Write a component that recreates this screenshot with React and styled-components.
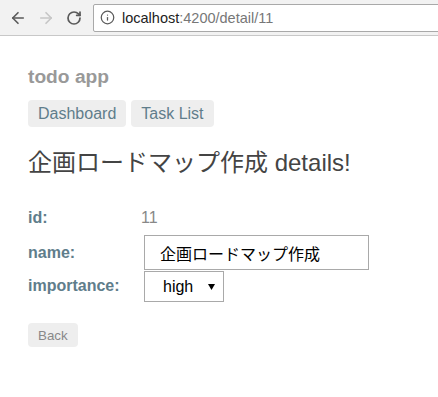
import React from 'react'
import styled, { createGlobalStyle } from 'styled-components'
import { ArrowLeft, ArrowRight, RotateCw, Info } from 'lucide-react'

const GlobalStyle = createGlobalStyle`
    body {
        margin: 0;
        background: #fff;
        font-family: "Liberation Sans", Arial, "Noto Sans CJK JP", sans-serif;
    }
`

const Toolbar = styled.div`
    display: flex;
    align-items: center;
    height: 35px;
    background-color: #f2f2f2;
    border-bottom: 1px solid #c8c8c8;
    overflow: hidden;
`
const NavIcon = styled.span`
    display: flex;
    align-items: center;
    justify-content: center;
    width: 28px;
    margin-left: ${props => props.first ? '4px' : '0'};
    color: ${props => props.disabled ? '#c6c6c6' : '#5a5a5a'};
`
const AddressBar = styled.div`
    display: flex;
    align-items: center;
    flex: 1;
    height: 26px;
    margin-left: 5px;
    margin-right: -20px;
    background-color: #fff;
    border: 1px solid #a9a9a9;
    border-radius: 2px;
    font-size: 14.5px;
`
const InfoIcon = styled.span`
    display: flex;
    color: #5a5a5a;
    margin: 0 7px 0 6px;
`
const Host = styled.span`
    color: #222;
`
const Path = styled.span`
    color: #777;
`

const Page = styled.div`
    padding: 30px 28px 0 28px;
    color: #333;
`
const Title = styled.h1`
    margin: 0;
    font-size: 19.2px;
    line-height: 22px;
    color: #999;
    font-weight: bold;
`
const Nav = styled.nav`
    display: flex;
    gap: 5px;
    margin-top: 12px;
`
const NavLink = styled.a`
    display: inline-block;
    padding: 5px 10px 4px 10px;
    line-height: 18px;
    font-size: 16px;
    color: #607d8b;
    background-color: #eee;
    border-radius: 4px;
    text-decoration: none;
`
const Heading = styled.h2`
    margin: 22px 0 0 0;
    font-size: 24px;
    line-height: 28px;
    font-weight: normal;
    color: #444;
`
const Details = styled.div`
    display: grid;
    grid-template-columns: 113px auto;
    align-items: center;
    margin-top: 32px;
`
const Label = styled.label`
    font-size: 16px;
    line-height: 18px;
    font-weight: bold;
    color: #607d8b;
    margin-bottom: ${props => props.gap || 0}px;
`
const Value = styled.div`
    font-size: 16px;
    line-height: 18px;
    color: #888;
    margin-bottom: ${props => props.gap || 0}px;
`
const NameInput = styled.input`
    box-sizing: border-box;
    width: 225px;
    height: 35px;
    margin-left: 3px;
    padding: 0 0 0 15px;
    border: 1px solid #a9a9a9;
    font-family: "Liberation Sans", Arial, "Noto Sans CJK JP", sans-serif;
    font-size: 16px;
    color: #000;
    outline: none;
`
const SelectWrap = styled.div`
    position: relative;
    width: 80px;
    margin-left: 3px;
    margin-top: 1px;
`
const Select = styled.select`
    box-sizing: border-box;
    appearance: none;
    width: 80px;
    height: 31px;
    padding: 0 0 0 18px;
    border: 1px solid #a9a9a9;
    border-radius: 0;
    background: #fff;
    font-family: "Liberation Sans", Arial, sans-serif;
    font-size: 16px;
    color: #000;
    outline: none;
`
const Caret = styled.svg`
    position: absolute;
    right: 9px;
    top: 13px;
    pointer-events: none;
`
const BackButton = styled.button`
    margin-top: 21px;
    height: 24px;
    padding: 0 10px;
    border: none;
    border-radius: 4px;
    background-color: #eee;
    color: #888;
    font-family: "Liberation Sans", Arial, sans-serif;
    font-size: 13.33px;
`

const task = { id: 11, name: '企画ロードマップ作成', importance: 'high' }

export default function App() {
    return (
        <>
            <GlobalStyle />
            <Toolbar>
                <NavIcon first><ArrowLeft size={18} strokeWidth={2.2} /></NavIcon>
                <NavIcon disabled><ArrowRight size={18} strokeWidth={2.2} /></NavIcon>
                <NavIcon><RotateCw size={16} strokeWidth={2.6} /></NavIcon>
                <AddressBar>
                    <InfoIcon><Info size={15} strokeWidth={2} /></InfoIcon>
                    <Host>localhost</Host><Path>:4200/detail/11</Path>
                </AddressBar>
            </Toolbar>
            <Page>
                <Title>todo app</Title>
                <Nav>
                    <NavLink href="#">Dashboard</NavLink>
                    <NavLink href="#">Task List</NavLink>
                </Nav>
                <Heading>{task.name} details!</Heading>
                <Details>
                    <Label gap={8}>id:</Label>
                    <Value gap={8}>{task.id}</Value>
                    <Label>name:</Label>
                    <NameInput defaultValue={task.name} />
                    <Label>importance:</Label>
                    <SelectWrap>
                        <Select defaultValue={task.importance}>
                            <option value="high">high</option>
                            <option value="middle">middle</option>
                            <option value="low">low</option>
                        </Select>
                        <Caret width="7" height="6" viewBox="0 0 7 6">
                            <path d="M0 0 H7 L3.5 6 Z" fill="#000" />
                        </Caret>
                    </SelectWrap>
                </Details>
                <BackButton>Back</BackButton>
            </Page>
        </>
    )
}
